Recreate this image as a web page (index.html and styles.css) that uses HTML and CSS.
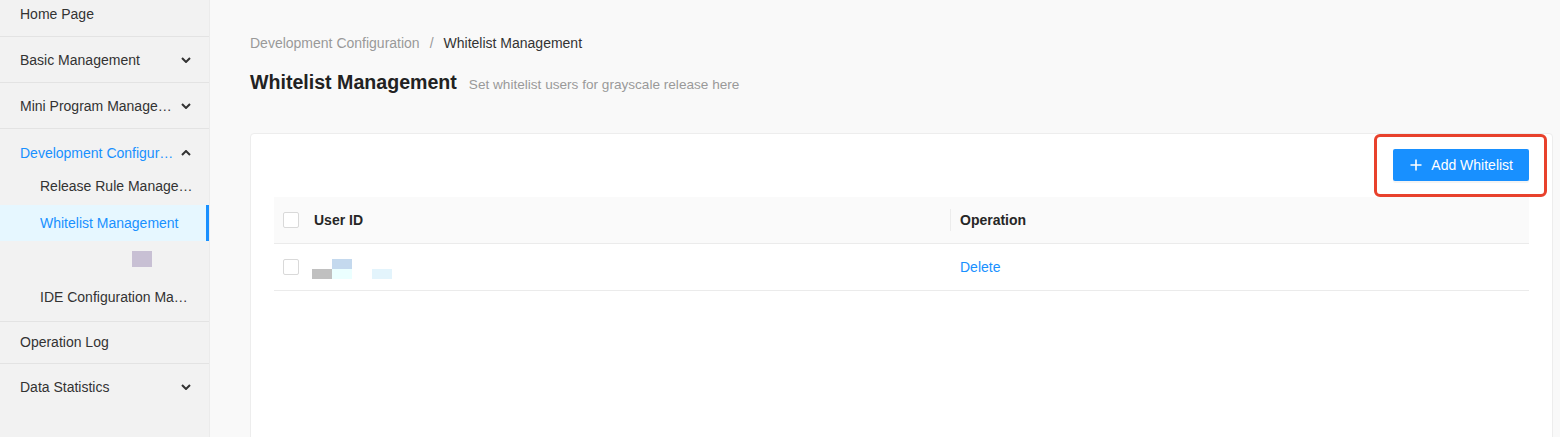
FILE: index.html
```html
<!DOCTYPE html>
<html lang="en">
<head>
<meta charset="utf-8">
<title>Whitelist Management</title>
<link rel="stylesheet" href="styles.css">
</head>
<body>
<div class="layout">
  <aside class="sidebar">
    <ul class="menu">
      <li class="menu-item"><div class="menu-title">Home Page</div></li>
      <li class="menu-item">
        <div class="menu-title"><span class="label">Basic Management</span>
          <svg class="chev" viewBox="0 0 10 6" width="10" height="6"><path d="M1 1l4 4 4-4" fill="none" stroke="#333" stroke-width="2"/></svg></div>
      </li>
      <li class="menu-item">
        <div class="menu-title"><span class="label">Mini Program Management</span>
          <svg class="chev" viewBox="0 0 10 6" width="10" height="6"><path d="M1 1l4 4 4-4" fill="none" stroke="#333" stroke-width="2"/></svg></div>
      </li>
      <li class="menu-item open">
        <div class="menu-title sub-open"><span class="label active-text">Development Configuration</span>
          <svg class="chev" viewBox="0 0 10 6" width="10" height="6"><path d="M1 5l4-4 4 4" fill="none" stroke="#333" stroke-width="2"/></svg></div>
        <ul class="submenu">
          <li class="sub-item"><span class="label">Release Rule Management</span></li>
          <li class="sub-item active"><span class="label">Whitelist Management</span></li>
          <li class="sub-item placeholder"><span class="swatch"></span></li>
          <li class="sub-item"><span class="label">IDE Configuration Management</span></li>
        </ul>
      </li>
      <li class="menu-item"><div class="menu-title short">Operation Log</div></li>
      <li class="menu-item last">
        <div class="menu-title"><span class="label">Data Statistics</span>
          <svg class="chev" viewBox="0 0 10 6" width="10" height="6"><path d="M1 1l4 4 4-4" fill="none" stroke="#333" stroke-width="2"/></svg></div>
      </li>
    </ul>
  </aside>
  <main class="main">
    <div class="breadcrumb">
      <span class="crumb">Development Configuration</span>
      <span class="sep">/</span>
      <span class="crumb current">Whitelist Management</span>
    </div>
    <div class="page-head">
      <h1 class="page-title">Whitelist Management</h1>
      <span class="page-desc">Set whitelist users for grayscale release here</span>
    </div>
    <section class="card">
      <div class="toolbar">
        <div class="btn-wrap">
          <button class="btn-primary">
            <svg viewBox="0 0 12 12" width="12" height="12"><path d="M6 0.5v11M0.5 6h11" stroke="#fff" stroke-width="1.6"/></svg>
            <span>Add Whitelist</span>
          </button>
          <span class="highlight"></span>
        </div>
      </div>
      <div class="table">
        <div class="tr thead">
          <div class="td col-check"><span class="checkbox"></span></div>
          <div class="td col-id">User ID</div>
          <div class="td col-op"><span class="divider"></span>Operation</div>
        </div>
        <div class="tr">
          <div class="td col-check"><span class="checkbox"></span></div>
          <div class="td col-id">
            <span class="mask">
              <span class="px p1"></span><span class="px p2"></span><span class="px p3"></span><span class="px p4"></span>
            </span>
          </div>
          <div class="td col-op"><a class="link">Delete</a></div>
        </div>
      </div>
    </section>
  </main>
</div>
</body>
</html>
```

FILE: styles.css
```css
* { box-sizing: border-box; }
html, body { margin: 0; padding: 0; height: 100%; overflow: hidden; }
body {
  font-family: "Liberation Sans", Arial, sans-serif;
  font-size: 14px;
  color: #333;
  background: #f9f9f9;
}
.layout { display: flex; height: 437px; }

.sidebar {
  width: 210px;
  flex: none;
  background: #f2f2f2;
  border-right: 1px solid #ebebeb;
  overflow: hidden;
}
.menu { list-style: none; margin: -9px 0 0; padding: 0; }
.menu-item { border-bottom: 1px solid #e3e3e3; }
.menu-item.last { border-bottom: none; }
.menu-title {
  height: 45px;
  display: flex;
  align-items: center;
  padding: 0 16px 0 20px;
  color: #333;
  white-space: nowrap;
}
.menu-title.short { height: 41px; padding-bottom: 2px; }
.menu-title .label {
  flex: 1;
  overflow: hidden;
  text-overflow: ellipsis;
  white-space: nowrap;
  max-width: 154px;
}
.chev { flex: none; margin-left: 7px; }
.menu-title.sub-open { height: 39px; padding-top: 9px; }
.active-text { color: #1890ff; }

.submenu { list-style: none; margin: 0; padding: 0 0 5px; }
.sub-item {
  height: 36px;
  display: flex;
  align-items: center;
  padding: 0 14px 0 40px;
  color: #333;
  margin-bottom: 1px;
}
.sub-item .label {
  overflow: hidden;
  text-overflow: ellipsis;
  white-space: nowrap;
}
.sub-item.active {
  background: #e6f7ff;
  color: #1890ff;
  border-right: 3px solid #1890ff;
  margin-bottom: 0;
}
.sub-item.placeholder { padding-left: 132px; margin-bottom: 2px; }
.swatch { width: 20px; height: 16px; background: #c8c0d4; display: block; }

.main { flex: 1; padding: 33px 7px 0 40px; min-width: 0; }
.breadcrumb { font-size: 14px; height: 20px; line-height: 20px; display: flex; }
.crumb { color: #999; }
.crumb.current { color: #333; }
.sep { color: #999; margin: 0 10px; }

.page-head { display: flex; align-items: baseline; margin-top: 18px; height: 28px; }
.page-title { font-size: 19.6px; font-weight: 700; color: #222; margin: 0 12px 0 0; }
.page-desc { font-size: 13.6px; color: #999; }

.card {
  margin-top: 34px;
  background: #fff;
  border: 1px solid #ededed;
  border-radius: 4px;
  height: 320px;
  padding: 15px 23px 0 23px;
}
.toolbar { display: flex; justify-content: flex-end; }
.btn-wrap { position: relative; }
.btn-primary {
  display: flex;
  align-items: center;
  gap: 9px;
  height: 32px;
  padding: 0 16px 0 17px;
  border: none;
  border-radius: 2px;
  background: #1890ff;
  color: #fff;
  font-family: inherit;
  font-size: 14px;
  box-shadow: 0 2px 0 rgba(0,0,0,0.045);
}
.highlight {
  position: absolute;
  left: -19px;
  top: -15px;
  right: -18px;
  bottom: -16px;
  border: 3px solid #e8412c;
  border-radius: 6px;
  pointer-events: none;
}
.table { margin-top: 16px; }
.tr {
  display: flex;
  align-items: center;
  height: 47px;
  border-bottom: 1px solid #ebebeb;
}
.thead { background: #fafafa; font-weight: 700; color: #262626; }
.td { display: flex; align-items: center; height: 100%; }
.col-check { width: 40px; padding-left: 9px; }
.col-id { width: 636px; }
.col-op { flex: 1; position: relative; padding-left: 10px; }
.divider {
  position: absolute;
  left: 0;
  top: 12px;
  bottom: 12px;
  width: 1px;
  background: #ececec;
}
.checkbox {
  width: 16px;
  height: 16px;
  border: 1px solid #d9d9d9;
  border-radius: 2px;
  background: #fff;
  display: block;
}
.mask { position: relative; width: 80px; height: 20px; display: block; margin-top: 4px; margin-left: -2px; }
.px { position: absolute; width: 20px; height: 10px; }
.p1 { left: 0; top: 10px; background: #c0c0c0; }
.p2 { left: 20px; top: 0; background: #c4d9ee; }
.p3 { left: 20px; top: 10px; background: #ebffff; }
.p4 { left: 60px; top: 10px; background: #e3f4fc; }
.link { color: #1890ff; cursor: pointer; }
```
